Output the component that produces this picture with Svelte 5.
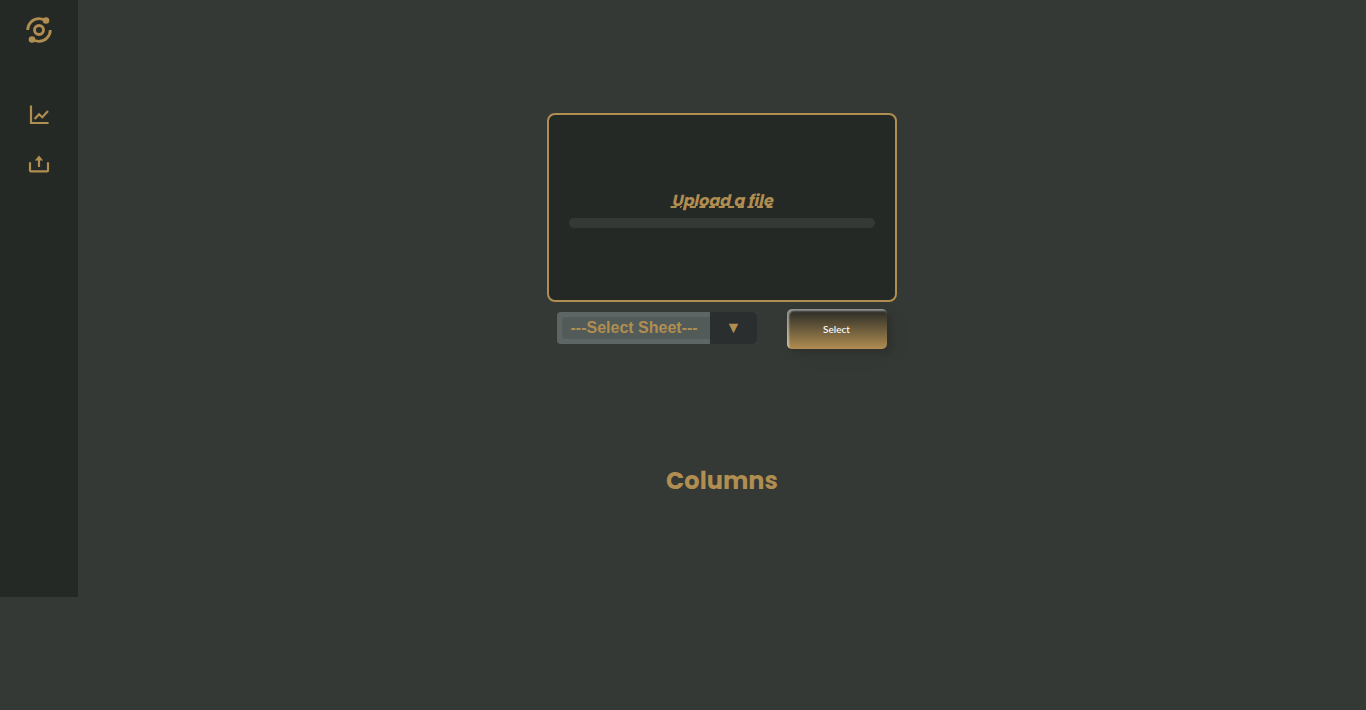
<script>
  let sheet = $state('---Select Sheet---');
</script>

<div class="page">
  <nav>
    <svg class="logo" width="28" height="28" viewBox="0 0 28 28" fill="none" stroke="#b08d51">
      <circle cx="14" cy="14" r="4.5" stroke-width="2.9" />
      <path d="M2.7 14A11.3 11.3 0 0 1 14 2.7Q18 2.7 21 5M25.3 14A11.3 11.3 0 0 1 14 25.3Q10 25.3 7 23" stroke-width="2.8" />
      <g fill="#b08d51" stroke="none"><circle cx="21" cy="4.5" r="3.3" /><circle cx="7" cy="23.5" r="3.3" /></g>
    </svg>
    <svg class="chart" width="20" height="20" viewBox="0 0 20 20" fill="none" stroke="#b08d51" stroke-width="2.2">
      <path d="M2 .4V18H19.6" /><path d="M5.6 14L10.1 9.3L13.3 12.2L19 6.1" />
    </svg>
    <svg class="upload" width="22" height="20" viewBox="0 0 22 20" fill="none" stroke="#b08d51" stroke-width="2.2">
      <path d="M2 8.2V16.4Q2 17.4 3 17.4H19Q20 17.4 20 16.4V8.2" /><path d="M11 13V5" /><path d="M6.8 6.6L11 1.6L15.2 6.6Z" fill="#b08d51" stroke="none" />
    </svg>
  </nav>
  <main>
    <section class="drop">
      <span class="label">Upload a file</span>
      <div class="progress"></div>
    </section>
    <div class="controls">
      <div class="select"><span class="value">{sheet}</span><span class="arrow">▼</span></div>
      <button>Select</button>
    </div>
    <h2>Columns</h2>
  </main>
</div>

<style>
  :global(body) { background: #353935; }
  .page { display: flex; height: 710px; overflow: hidden; }
  nav { width: 78px; height: 597px; background: #252925; display: flex; flex-direction: column; align-items: center; box-sizing: border-box; padding-top: 16px; }
  svg { display: block; flex: none; }
  .chart { margin-top: 61px; }
  .upload { margin-top: 29px; }
  main { flex: 1; display: flex; flex-direction: column; align-items: center; padding-top: 113px; }
  .drop { box-sizing: border-box; width: 350px; height: 189px; border: 2px solid #b08d51; border-radius: 8px; background: #252925; padding: 74px 20px 0; display: flex; flex-direction: column; align-items: center; }
  .label { height: 23px; margin-bottom: 6px; padding-left: 2.6px; font: normal 700 16px/23px Poppins, Inter, sans-serif; color: #b08d51; text-decoration: underline dashed; text-decoration-thickness: 1.5px; text-underline-offset: 0; transform: skewX(-12deg); white-space: nowrap; }
  .progress { width: 306px; height: 10px; border-radius: 5px; background: #353935; }
  .controls { width: 330px; height: 40px; margin-top: 7px; display: flex; justify-content: space-between; align-items: flex-start; }
  .select { width: 200px; height: 32px; margin-top: 3px; display: flex; border-radius: 4px; overflow: hidden; background: #5d6664; color: #b08d51; font: 700 16px/22px "Liberation Sans", sans-serif; }
  .value { box-sizing: border-box; width: 148px; height: 22px; margin: 5px 0 5px 5px; padding-left: 8.5px; border-radius: 4px 0 0 4px; background: #535b59; white-space: nowrap; }
  .arrow { width: 47px; line-height: 32px; text-align: center; background: #2a2e2f; }
  button { width: 100px; height: 40px; padding: 0 1px 0 0; border: 0; border-radius: 5px; color: #fff; font: 500 10px Lato, sans-serif; background: linear-gradient(#252925, #b08d51); box-shadow: inset 2px 2px 2px 0 rgba(255,255,255,.5), 7px 7px 20px 0 rgba(0,0,0,.06), 4px 4px 5px 0 rgba(0,0,0,.1); }
  h2 { margin: 114px 0 0; font: 700 24px/36px Poppins, Inter, sans-serif; color: #b08d51; }
</style>
